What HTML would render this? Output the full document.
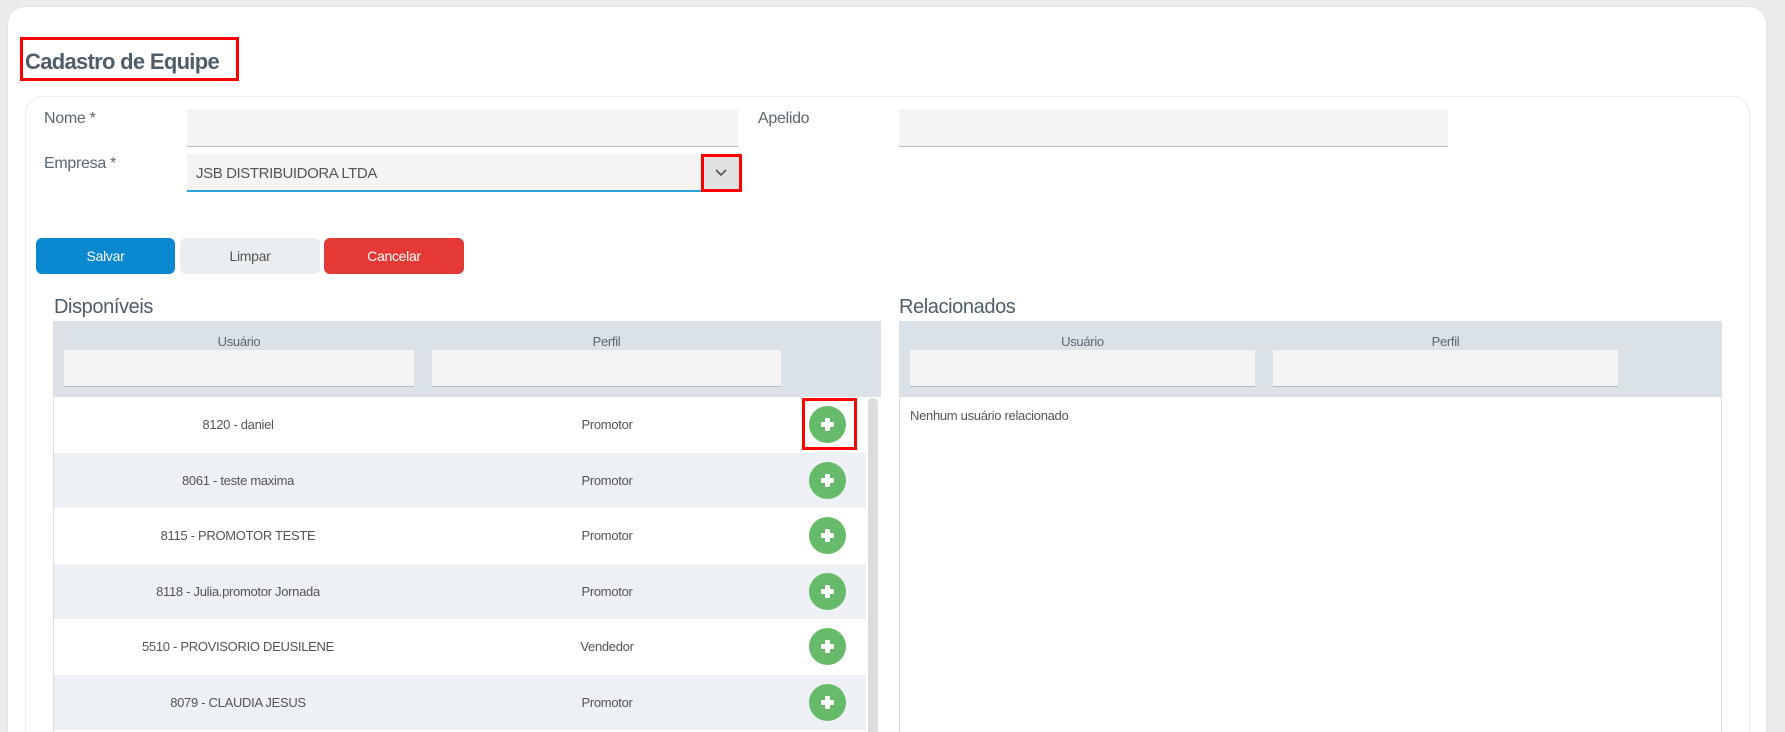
<!DOCTYPE html>
<html style="width:1785px;height:732px;overflow:hidden"><head><meta charset="utf-8"><style>
*{box-sizing:border-box;margin:0;padding:0}
body{width:1785px;height:732px;overflow:hidden;background:#ebebeb;font-family:"Liberation Sans",sans-serif;color:#555;position:relative}
#wrap{position:absolute;left:0;top:0;width:1785px;height:732px;overflow:hidden}
.abs{position:absolute}
.outer{left:7px;top:6px;width:1760px;height:726px;background:#fff;border-radius:18px 18px 0 0;border:1px solid #e2e2e2;border-bottom:none}
.inner{left:25px;top:96px;width:1725px;height:636px;background:#fff;border-radius:18px 18px 0 0;border:1px solid #ececec;border-bottom:none}
.lbl{font-size:16px;color:#5b6670;letter-spacing:-0.3px}
.inp{background:#f4f4f4;border-bottom:1px solid #aebcc5}
.btn{height:36px;border-radius:6px;font-size:14px;text-align:center;line-height:36px;letter-spacing:-0.3px}
.hdr{background:#dbe2e7}
.th{font-size:13px;color:#5b6670;text-align:center;letter-spacing:-0.3px}
.row{left:54px;width:812px;height:55.5px;font-size:13px;color:#555;letter-spacing:-0.3px}
.row span{position:absolute;top:0;line-height:55px;transform:translateX(-50%);white-space:nowrap}
.plus{position:absolute;left:755px;top:9px;width:37px;height:37px;border-radius:50%;background:#66bb6a}
.plus:before{content:"";position:absolute;left:16px;top:12px;width:5px;height:13px;background:#fff;border-radius:1px}
.plus:after{content:"";position:absolute;left:12px;top:16px;width:13px;height:5px;background:#fff;border-radius:1px}
.red{border:3px solid #f00}
</style></head><body><div id="wrap">
<div class="abs outer"></div>
<div class="abs red" style="left:20px;top:37px;width:219px;height:44px"></div>
<div class="abs" style="left:25px;top:49px;font-size:22px;font-weight:bold;color:#4f5d69;letter-spacing:-0.7px">Cadastro de Equipe</div>
<div class="abs inner"></div>
<div class="abs lbl" style="left:44px;top:110px">Nome *</div>
<div class="abs inp" style="left:187px;top:109px;width:551px;height:38px"></div>
<div class="abs lbl" style="left:758px;top:110px">Apelido</div>
<div class="abs inp" style="left:899px;top:109px;width:549px;height:38px"></div>
<div class="abs lbl" style="left:44px;top:155px">Empresa *</div>
<div class="abs inp" style="left:187px;top:154px;width:553px;height:38px;border-bottom:2px solid #2aa3d9"></div>
<div class="abs" style="left:196px;top:165px;font-size:15px;color:#555;letter-spacing:-0.4px">JSB DISTRIBUIDORA LTDA</div>
<div class="abs" style="left:701px;top:154px;width:41px;height:38px;background:#e2e2e2"></div>
<div class="abs red" style="left:701px;top:154px;width:41px;height:38px"></div>
<svg class="abs" style="left:714px;top:168px" width="14" height="10"><path d="M2 2 L7 7 L12 2" stroke="#555" stroke-width="1.6" fill="none"/></svg>
<div class="abs btn" style="left:36px;top:238px;width:139px;background:#0a88cf;color:#fff">Salvar</div>
<div class="abs btn" style="left:180px;top:238px;width:140px;background:#eaeef1;color:#555">Limpar</div>
<div class="abs btn" style="left:324px;top:238px;width:140px;background:#e53935;color:#fff">Cancelar</div>
<div class="abs" style="left:54px;top:296px;font-size:20px;color:#4f5d69;letter-spacing:-0.4px">Disponíveis</div>
<div class="abs hdr" style="left:53px;top:321px;width:828px;height:76px"></div>
<div class="abs th" style="left:64px;top:334px;width:350px">Usuário</div>
<div class="abs th" style="left:432px;top:334px;width:349px">Perfil</div>
<div class="abs inp" style="left:64px;top:350px;width:350px;height:37px"></div>
<div class="abs inp" style="left:432px;top:350px;width:349px;height:37px"></div>
<div class="abs" style="left:53px;top:397px;width:1px;height:335px;background:#ddd"></div>
<div class="abs" style="left:868px;top:398px;width:10px;height:334px;background:#dcdcdc;border-radius:5px 5px 0 0"></div>
<div class="abs row" style="top:397px;background:#fff"><span style="left:184px">8120 - daniel</span><span style="left:553px">Promotor</span><div class="plus"></div></div>
<div class="abs row" style="top:452.5px;background:#edf0f4"><span style="left:184px">8061 - teste maxima</span><span style="left:553px">Promotor</span><div class="plus"></div></div>
<div class="abs row" style="top:508px;background:#fff"><span style="left:184px">8115 - PROMOTOR TESTE</span><span style="left:553px">Promotor</span><div class="plus"></div></div>
<div class="abs row" style="top:563.5px;background:#edf0f4"><span style="left:184px">8118 - Julia.promotor Jornada</span><span style="left:553px">Promotor</span><div class="plus"></div></div>
<div class="abs row" style="top:619px;background:#fff"><span style="left:184px">5510 - PROVISORIO DEUSILENE</span><span style="left:553px">Vendedor</span><div class="plus"></div></div>
<div class="abs row" style="top:674.5px;background:#edf0f4"><span style="left:184px">8079 - CLAUDIA JESUS</span><span style="left:553px">Promotor</span><div class="plus"></div></div>
<div class="abs red" style="left:802px;top:398px;width:55px;height:52px"></div>
<div class="abs" style="left:899px;top:296px;font-size:20px;color:#4f5d69;letter-spacing:-0.4px">Relacionados</div>
<div class="abs hdr" style="left:899px;top:321px;width:823px;height:76px"></div>
<div class="abs th" style="left:910px;top:334px;width:345px">Usuário</div>
<div class="abs th" style="left:1273px;top:334px;width:345px">Perfil</div>
<div class="abs inp" style="left:910px;top:350px;width:345px;height:37px"></div>
<div class="abs inp" style="left:1273px;top:350px;width:345px;height:37px"></div>
<div class="abs" style="left:899px;top:397px;width:823px;height:335px;border-left:1px solid #ddd;border-right:1px solid #ddd"></div>
<div class="abs" style="left:910px;top:408px;font-size:13px;color:#555;letter-spacing:-0.3px">Nenhum usuário relacionado</div>
</div></body></html>
